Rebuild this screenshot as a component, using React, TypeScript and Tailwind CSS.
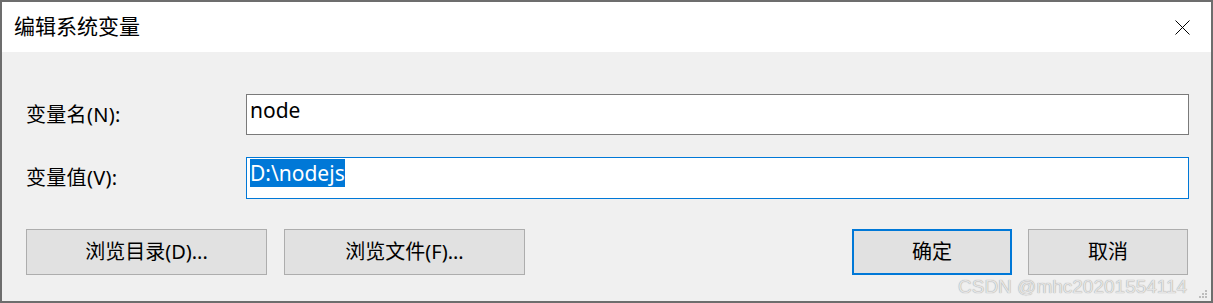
import React from 'react';

const font = { fontFamily: '"Noto Sans", "Noto Sans CJK SC", sans-serif' };

const Button = ({ label, hotkey, wide, primary }: { label: string; hotkey?: string; wide?: boolean; primary?: boolean }) => (
  <button
    type="button"
    className={`h-[46px] bg-[#e1e1e1] text-[20px] text-black flex items-center justify-center ${
      wide ? 'w-[241px]' : 'w-[160px]'
    } ${primary ? 'border-2 border-[#0078d7]' : 'border border-[#adadad]'}`}
  >
    {label}
    {hotkey}
  </button>
);

const App = () => {
  return (
    <div className="w-[1213px] h-[303px] border-2 border-[#6d6d6d] flex flex-col relative text-black" style={font}>
      {/* Title bar */}
      <div className="h-[50px] bg-white flex items-center justify-between pl-[12px] pr-[21px]">
        <span className="text-[21px]">编辑系统变量</span>
        <svg width="15" height="15" viewBox="0 0 15 15">
          <path d="M0.5 0.5 L14.5 14.5 M14.5 0.5 L0.5 14.5" stroke="#000" strokeWidth="1" fill="none" />
        </svg>
      </div>

      {/* Body */}
      <div className="flex-1 bg-[#f0f0f0] pt-[42px] pl-[24px] pr-[22px]">
        <div className="flex items-center h-[41px]">
          <label className="w-[220px] text-[20px] tracking-[0.3px]">变量名(N):</label>
          <div className="flex-1 h-full bg-white border border-[#7a7a7a] px-[3px] pt-[1px] text-[21px] leading-[28px]">
            node
          </div>
        </div>

        <div className="flex items-center h-[42px] mt-[22px]">
          <label className="w-[220px] text-[20px] tracking-[0.3px]">变量值(V):</label>
          <div className="flex-1 h-full bg-white border border-[#0078d7] px-[3px] pt-[1px] text-[21px] leading-[28px]">
            <span className="bg-[#0078d7] text-white">D:\nodejs</span>
          </div>
        </div>

        <div className="flex justify-between mt-[30px]">
          <div className="flex gap-[17px]">
            <Button label="浏览目录" hotkey="(D)..." wide />
            <Button label="浏览文件" hotkey="(F)..." wide />
          </div>
          <div className="flex gap-[16px] pr-[1px]">
            <Button label="确定" primary />
            <Button label="取消" />
          </div>
        </div>
      </div>

      {/* CSDN watermark + resize grip */}
      <span
        className="absolute left-[956px] top-[275px] text-[19px] leading-none text-[#e4e4e4] [text-shadow:0_0_1px_#8a8a8a]"
        style={{ fontFamily: '"Liberation Sans", Arial, sans-serif' }}
      >
        CSDN @mhc20201554114
      </span>
      <svg className="absolute right-[4px] bottom-[3px]" width="9" height="9" viewBox="0 0 9 9">
        <g fill="#bdbdbd">
          <rect x="7" y="1" width="2" height="2" />
          <rect x="4" y="4" width="2" height="2" />
          <rect x="7" y="4" width="2" height="2" />
          <rect x="1" y="7" width="2" height="2" />
          <rect x="4" y="7" width="2" height="2" />
          <rect x="7" y="7" width="2" height="2" />
        </g>
      </svg>
    </div>
  );
};

export default App;
